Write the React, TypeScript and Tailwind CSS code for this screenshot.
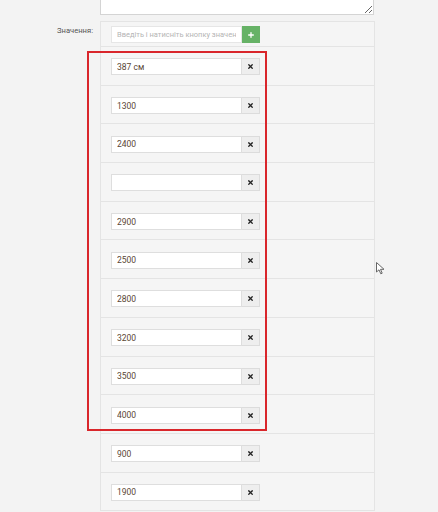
import { Plus, X } from "lucide-react"

const values = ["387 см", "1300", "2400", "", "2900", "2500", "2800", "3200", "3500", "4000", "900", "1900"]

function ValueRow({ value }: { value: string }) {
    return <div className=" h-[38.7px] border-t border-[#e4e4e4] flex items-center pl-[10px] pt-[2px]">
        <div className=" flex h-[17px]">
            <input
                readOnly
                value={value}
                className=" w-[131px] h-[17px] bg-white border border-[#dedede] px-[5px] text-[8.5px] text-[#5a4634] outline-none"
            />
            <button className=" w-[18px] h-[17px] bg-[#eeeeee] border border-l-0 border-[#dcdcdc] flex items-center justify-center">
                <X size={7} strokeWidth={4.5} color="#222" />
            </button>
        </div>
    </div>
}

export default function App() {
    return <div className=" relative w-[438px] h-[512px] overflow-hidden bg-[#f3f3f3] font-['Roboto',sans-serif]">
        <div className=" flex">
            <div className=" w-[100px]" />
            <div className=" w-[274px] h-[15px] overflow-hidden">
                <textarea className=" block w-[274px] h-[60px] -mt-[45px] bg-white border border-[#d4d4d4] outline-none" />
            </div>
        </div>
        <div className=" flex mt-[6px]">
            <div className=" w-[100px] pr-[7px] pt-[4px] text-right text-[7.6px] text-[#555]">Значення:</div>
            <div className=" w-[275px] border border-[#e4e4e4] bg-[#f5f5f5]">
                <div className=" flex pl-[10px] pt-[4px] pb-[3px]">
                    <input
                        readOnly
                        placeholder="Введіть і натисніть кнопку значення"
                        className=" w-[131px] h-[17px] bg-white border border-[#e6e6e6] px-[5px] text-[7.5px] placeholder:text-[#b4b4b4] outline-none"
                    />
                    <button className=" w-[18px] h-[17px] bg-[#66b266] flex items-center justify-center">
                        <Plus size={8} strokeWidth={4} color="#fff" />
                    </button>
                </div>
                {values.map((v, i) => <ValueRow key={i} value={v} />)}
            </div>
        </div>
        <div className=" absolute left-[87px] top-[51px] w-[180px] h-[380px] border-2 border-[#d9262b]" />
        <svg className=" absolute left-[376px] top-[262px]" width="9" height="13" viewBox="0 0 9 13">
            <path d="M0.5 0.5 L0.5 10 L3 7.8 L4.8 11.8 L6.2 11.2 L4.5 7.3 L8 7.3 Z" fill="#fff" stroke="#666" strokeWidth="1" />
        </svg>
    </div>
}
